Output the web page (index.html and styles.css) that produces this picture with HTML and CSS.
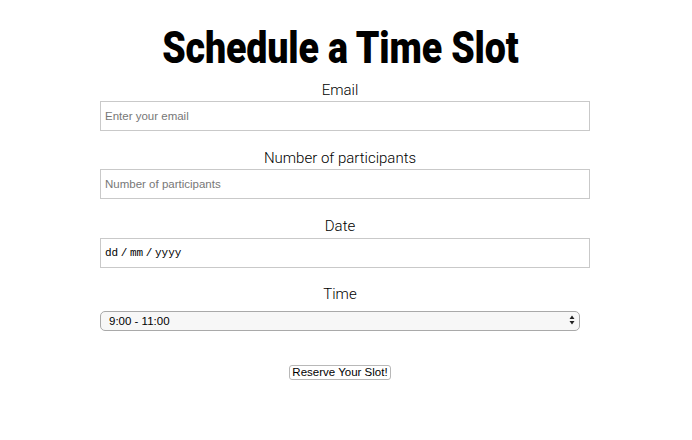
FILE: index.html
```html
<!DOCTYPE html>
<html>
<head>
<meta charset="utf-8">
<link rel="stylesheet" href="styles.css">
</head>
<body>
<div class="page">
  <form class="form">
    <h1 class="title"><span class="title-text">Schedule a Time Slot</span></h1>
    <label class="label" for="email">Email</label>
    <input class="field" id="email" type="text" placeholder="Enter your email">
    <label class="label" for="num">Number of participants</label>
    <input class="field" id="num" type="text" placeholder="Number of participants">
    <label class="label" for="date">Date</label>
    <input class="field date" id="date" type="text" value="dd / mm / yyyy">
    <label class="label label-time" for="time">Time</label>
    <div class="select-wrap">
      <select class="select" id="time">
        <option>9:00 - 11:00</option>
      </select>
      <svg class="arrows" width="6" height="10" viewBox="0 0 6 10"><path d="M3 0.5 L5.5 4 H0.5 Z M3 9.5 L5.5 6 H0.5 Z" fill="#222"/></svg>
    </div>
    <div class="actions"><button class="btn" type="button">Reserve Your Slot!</button></div>
  </form>
</div>
</body>
</html>
```
FILE: styles.css
```css
html, body {
  margin: 0;
  padding: 0;
  background: #fff;
}
.page {
  padding-left: 100px;
}
.form {
  width: 480px;
  display: flex;
  flex-direction: column;
  font-family: Roboto, "Liberation Sans", sans-serif;
}
.title {
  margin: 21px 0 0 0;
  height: 59px;
  line-height: 54px;
  text-align: center;
  font-size: 45px;
  font-weight: 900;
  color: #000;
}
.title-text {
  display: inline-block;
  transform: scaleX(0.835);
  letter-spacing: -0.2px;
}
.label {
  display: block;
  text-align: center;
  font-size: 15px;
  font-weight: 300;
  line-height: 20px;
  color: #000;
  margin-bottom: 1px;
}
.field {
  box-sizing: border-box;
  width: 490px;
  height: 30px;
  margin: 0 0 17px 0;
  padding: 0 4px;
  border: 1px solid #c9c9c9;
  font-family: "Liberation Sans", Arial, sans-serif;
  font-size: 11.5px;
  color: #000;
  outline: none;
}
.field::placeholder {
  color: #777;
}
.date {
  font-family: "Liberation Mono", "Courier New", monospace;
  font-size: 11px;
  height: 30px;
  margin-top: 1px;
  word-spacing: -4px;
}
.label-time {
  margin-top: -1px;
  margin-bottom: 6px;
}
.select-wrap {
  position: relative;
  width: 480px;
  height: 20px;
}
.select {
  appearance: none;
  -webkit-appearance: none;
  box-sizing: border-box;
  width: 480px;
  height: 20px;
  margin: 0;
  padding: 0 0 0 8px;
  border: 1px solid #a9a9a9;
  border-radius: 5px;
  background: #f7f7f7;
  font-family: "Liberation Sans", Arial, sans-serif;
  font-size: 11.5px;
  color: #000;
}
.arrows {
  position: absolute;
  right: 5px;
  top: 5px;
}
.actions {
  display: flex;
  justify-content: center;
  margin-top: 35px;
}
.btn {
  box-sizing: border-box;
  height: 15px;
  padding: 0 2px;
  border: 1px solid #b8b8b8;
  border-radius: 3px;
  background: #fff;
  font-family: "Liberation Sans", Arial, sans-serif;
  font-size: 11.5px;
  line-height: 13px;
  color: #000;
}
```
